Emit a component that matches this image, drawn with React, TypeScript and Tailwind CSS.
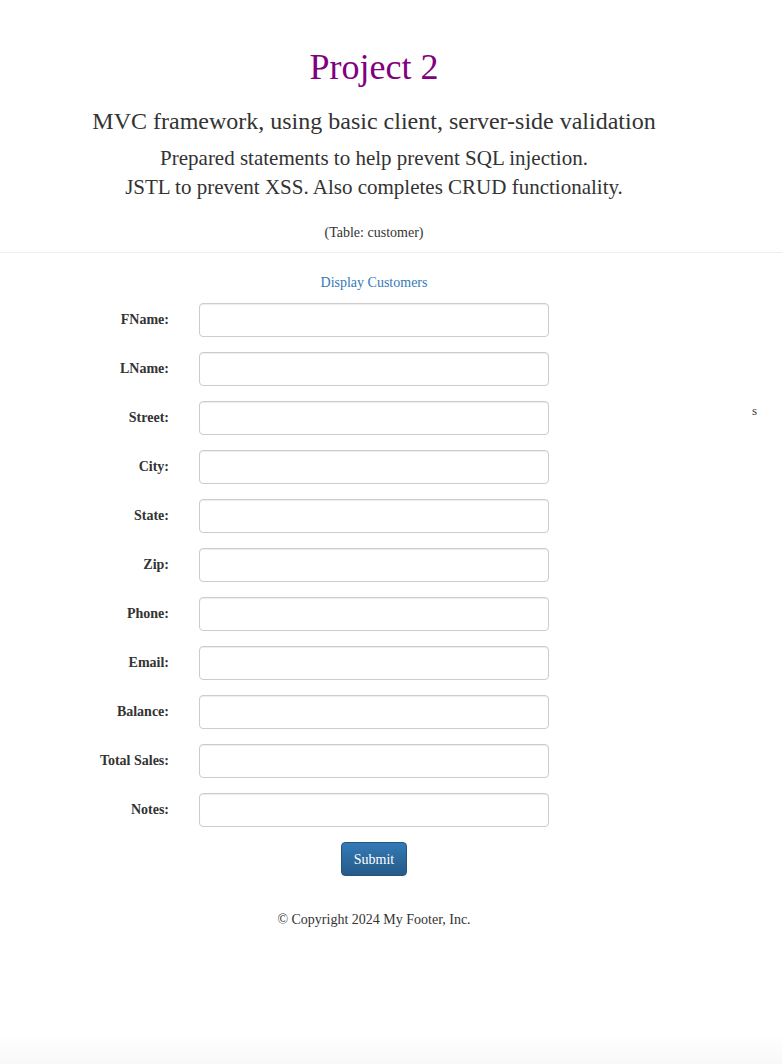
import React from "react";

const fields = ["FName", "LName", "Street", "City", "State", "Zip", "Phone", "Email", "Balance", "Total Sales", "Notes"];

export default function App() {
  return (
    <div className="relative min-h-[1064px] bg-white text-[14px] text-[#333]" style={{ fontFamily: '"Liberation Serif", "Times New Roman", serif' }}>
      <div className="flex">
        <div className="w-[748px] pt-[47px] text-center">
          <h1 className="text-[36px] leading-[40px] text-[#800080]">Project 2</h1>
          <h2 className="mt-[20px] text-[24px] leading-[28px]">MVC framework, using basic client, server-side validation</h2>
          <p className="mt-[9px] text-[21px] leading-[29px]">Prepared statements to help prevent SQL injection.</p>
          <p className="text-[21px] leading-[29px]">JSTL to prevent XSS. Also completes CRUD functionality.</p>
          <p className="mt-[21px] text-[14px] leading-[20px]">(Table: customer)</p>
        </div>
      </div>
      <hr className="mt-[9px] border-t border-[#eee]" />
      <div className="flex">
        <div className="w-[748px]">
          <div className="mt-[20px] text-center leading-[20px]">
            <a className="text-[#337ab7]">Display Customers</a>
          </div>
          <div className="mt-[10px] flex flex-col gap-[15px]">
            {fields.map((f) => (
              <div key={f} className="flex items-center">
                <label className="w-[169px] text-right font-bold leading-[20px]">{f}:</label>
                <input className="ml-[30px] h-[34px] w-[350px] rounded-[4px] border border-[#ccc] bg-white shadow-[inset_0_1px_1px_rgba(0,0,0,0.075)]" />
              </div>
            ))}
          </div>
          <div className="mt-[15px] flex justify-center">
            <button className="h-[34px] rounded-[4px] border border-[#245580] bg-gradient-to-b from-[#337ab7] to-[#265a88] px-[12px] text-[14px] text-white">
              Submit
            </button>
          </div>
          <p className="mt-[34px] text-center leading-[20px]">© Copyright 2024 My Footer, Inc.</p>
        </div>
        <div className="pl-[4px] pt-[148px] text-[13px]">s</div>
      </div>
      <div className="absolute bottom-0 left-0 right-0 h-[30px] bg-gradient-to-b from-white to-[#f8f8f8]" />
    </div>
  );
}
